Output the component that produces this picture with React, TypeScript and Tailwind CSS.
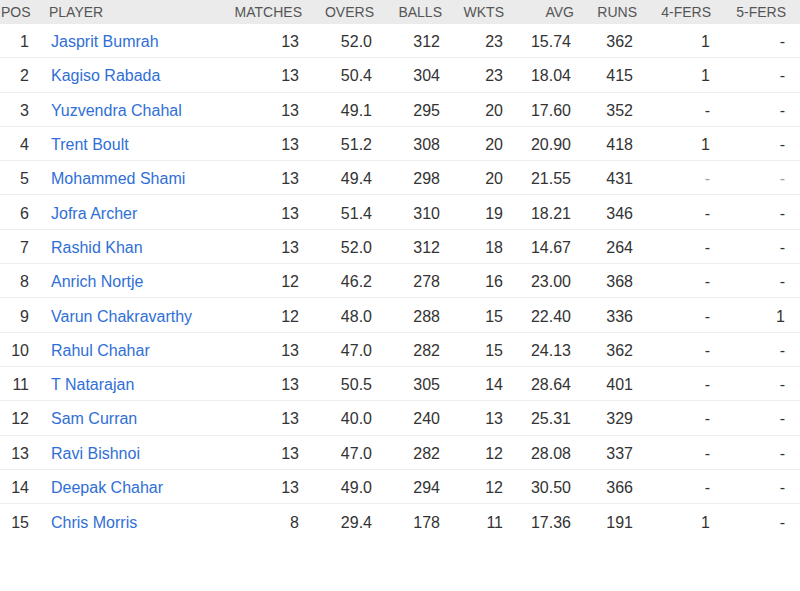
import React from "react";

type Row = {
  pos: number;
  player: string;
  matches: number;
  overs: string;
  balls: number;
  wkts: number;
  avg: string;
  runs: number;
  fours: string;
  fives: string;
  faint?: boolean;
};

const rows: Row[] = [
  { pos: 1, player: "Jasprit Bumrah", matches: 13, overs: "52.0", balls: 312, wkts: 23, avg: "15.74", runs: 362, fours: "1", fives: "-" },
  { pos: 2, player: "Kagiso Rabada", matches: 13, overs: "50.4", balls: 304, wkts: 23, avg: "18.04", runs: 415, fours: "1", fives: "-" },
  { pos: 3, player: "Yuzvendra Chahal", matches: 13, overs: "49.1", balls: 295, wkts: 20, avg: "17.60", runs: 352, fours: "-", fives: "-" },
  { pos: 4, player: "Trent Boult", matches: 13, overs: "51.2", balls: 308, wkts: 20, avg: "20.90", runs: 418, fours: "1", fives: "-" },
  { pos: 5, player: "Mohammed Shami", matches: 13, overs: "49.4", balls: 298, wkts: 20, avg: "21.55", runs: 431, fours: "-", fives: "-", faint: true },
  { pos: 6, player: "Jofra Archer", matches: 13, overs: "51.4", balls: 310, wkts: 19, avg: "18.21", runs: 346, fours: "-", fives: "-" },
  { pos: 7, player: "Rashid Khan", matches: 13, overs: "52.0", balls: 312, wkts: 18, avg: "14.67", runs: 264, fours: "-", fives: "-" },
  { pos: 8, player: "Anrich Nortje", matches: 12, overs: "46.2", balls: 278, wkts: 16, avg: "23.00", runs: 368, fours: "-", fives: "-" },
  { pos: 9, player: "Varun Chakravarthy", matches: 12, overs: "48.0", balls: 288, wkts: 15, avg: "22.40", runs: 336, fours: "-", fives: "1" },
  { pos: 10, player: "Rahul Chahar", matches: 13, overs: "47.0", balls: 282, wkts: 15, avg: "24.13", runs: 362, fours: "-", fives: "-" },
  { pos: 11, player: "T Natarajan", matches: 13, overs: "50.5", balls: 305, wkts: 14, avg: "28.64", runs: 401, fours: "-", fives: "-" },
  { pos: 12, player: "Sam Curran", matches: 13, overs: "40.0", balls: 240, wkts: 13, avg: "25.31", runs: 329, fours: "-", fives: "-" },
  { pos: 13, player: "Ravi Bishnoi", matches: 13, overs: "47.0", balls: 282, wkts: 12, avg: "28.08", runs: 337, fours: "-", fives: "-" },
  { pos: 14, player: "Deepak Chahar", matches: 13, overs: "49.0", balls: 294, wkts: 12, avg: "30.50", runs: 366, fours: "-", fives: "-" },
  { pos: 15, player: "Chris Morris", matches: 8, overs: "29.4", balls: 178, wkts: 11, avg: "17.36", runs: 191, fours: "1", fives: "-" },
];

// column widths add up to the 800px window
const cols = "grid grid-cols-[32px_200px_72px_72px_68px_62px_70px_64px_74px_86px]";

export default function App() {
  return (
    <div className="w-[800px] h-[591px] bg-white font-['Liberation_Sans',Arial,sans-serif]">
      {/* header */}
      <div className={`${cols} h-[24px] items-center bg-[#ebebeb] text-[14px] text-[#555]`}>
        <div className="pl-[1px]">POS</div>
        <div className="pl-[17px]">PLAYER</div>
        <div className="text-right pr-[2px]">MATCHES</div>
        <div className="text-right pr-[2px]">OVERS</div>
        <div className="text-right pr-[2px]">BALLS</div>
        <div className="text-right pr-[2px]">WKTS</div>
        <div className="text-right pr-[2px]">AVG</div>
        <div className="text-right pr-[3px]">RUNS</div>
        <div className="text-right pr-[3px]">4-FERS</div>
        <div className="text-right pr-[14px]">5-FERS</div>
      </div>

      {/* rows */}
      {rows.map((r, i) => (
        <div
          key={r.pos}
          className={`${cols} h-[34.3px] pt-[3px] items-center text-[16px] text-[#333] ${
            i < rows.length - 1 ? "border-b border-[#ededed]" : ""
          }`}
        >
          <div className="text-right pr-[3px]">{r.pos}</div>
          <div className="pl-[19px] text-[#2f6fd6] whitespace-nowrap">{r.player}</div>
          <div className="text-right pr-[5px]">{r.matches}</div>
          <div className="text-right pr-[4px]">{r.overs}</div>
          <div className="text-right pr-[4px]">{r.balls}</div>
          <div className="text-right pr-[3px]">{r.wkts}</div>
          <div className="text-right pr-[5px]">{r.avg}</div>
          <div className="text-right pr-[7px]">{r.runs}</div>
          <div className={`text-right pr-[4px] ${r.faint ? "text-[#a0a0a0]" : ""}`}>{r.fours}</div>
          <div className={`text-right pr-[15px] ${r.faint ? "text-[#a0a0a0]" : ""}`}>{r.fives}</div>
        </div>
      ))}
    </div>
  );
}
